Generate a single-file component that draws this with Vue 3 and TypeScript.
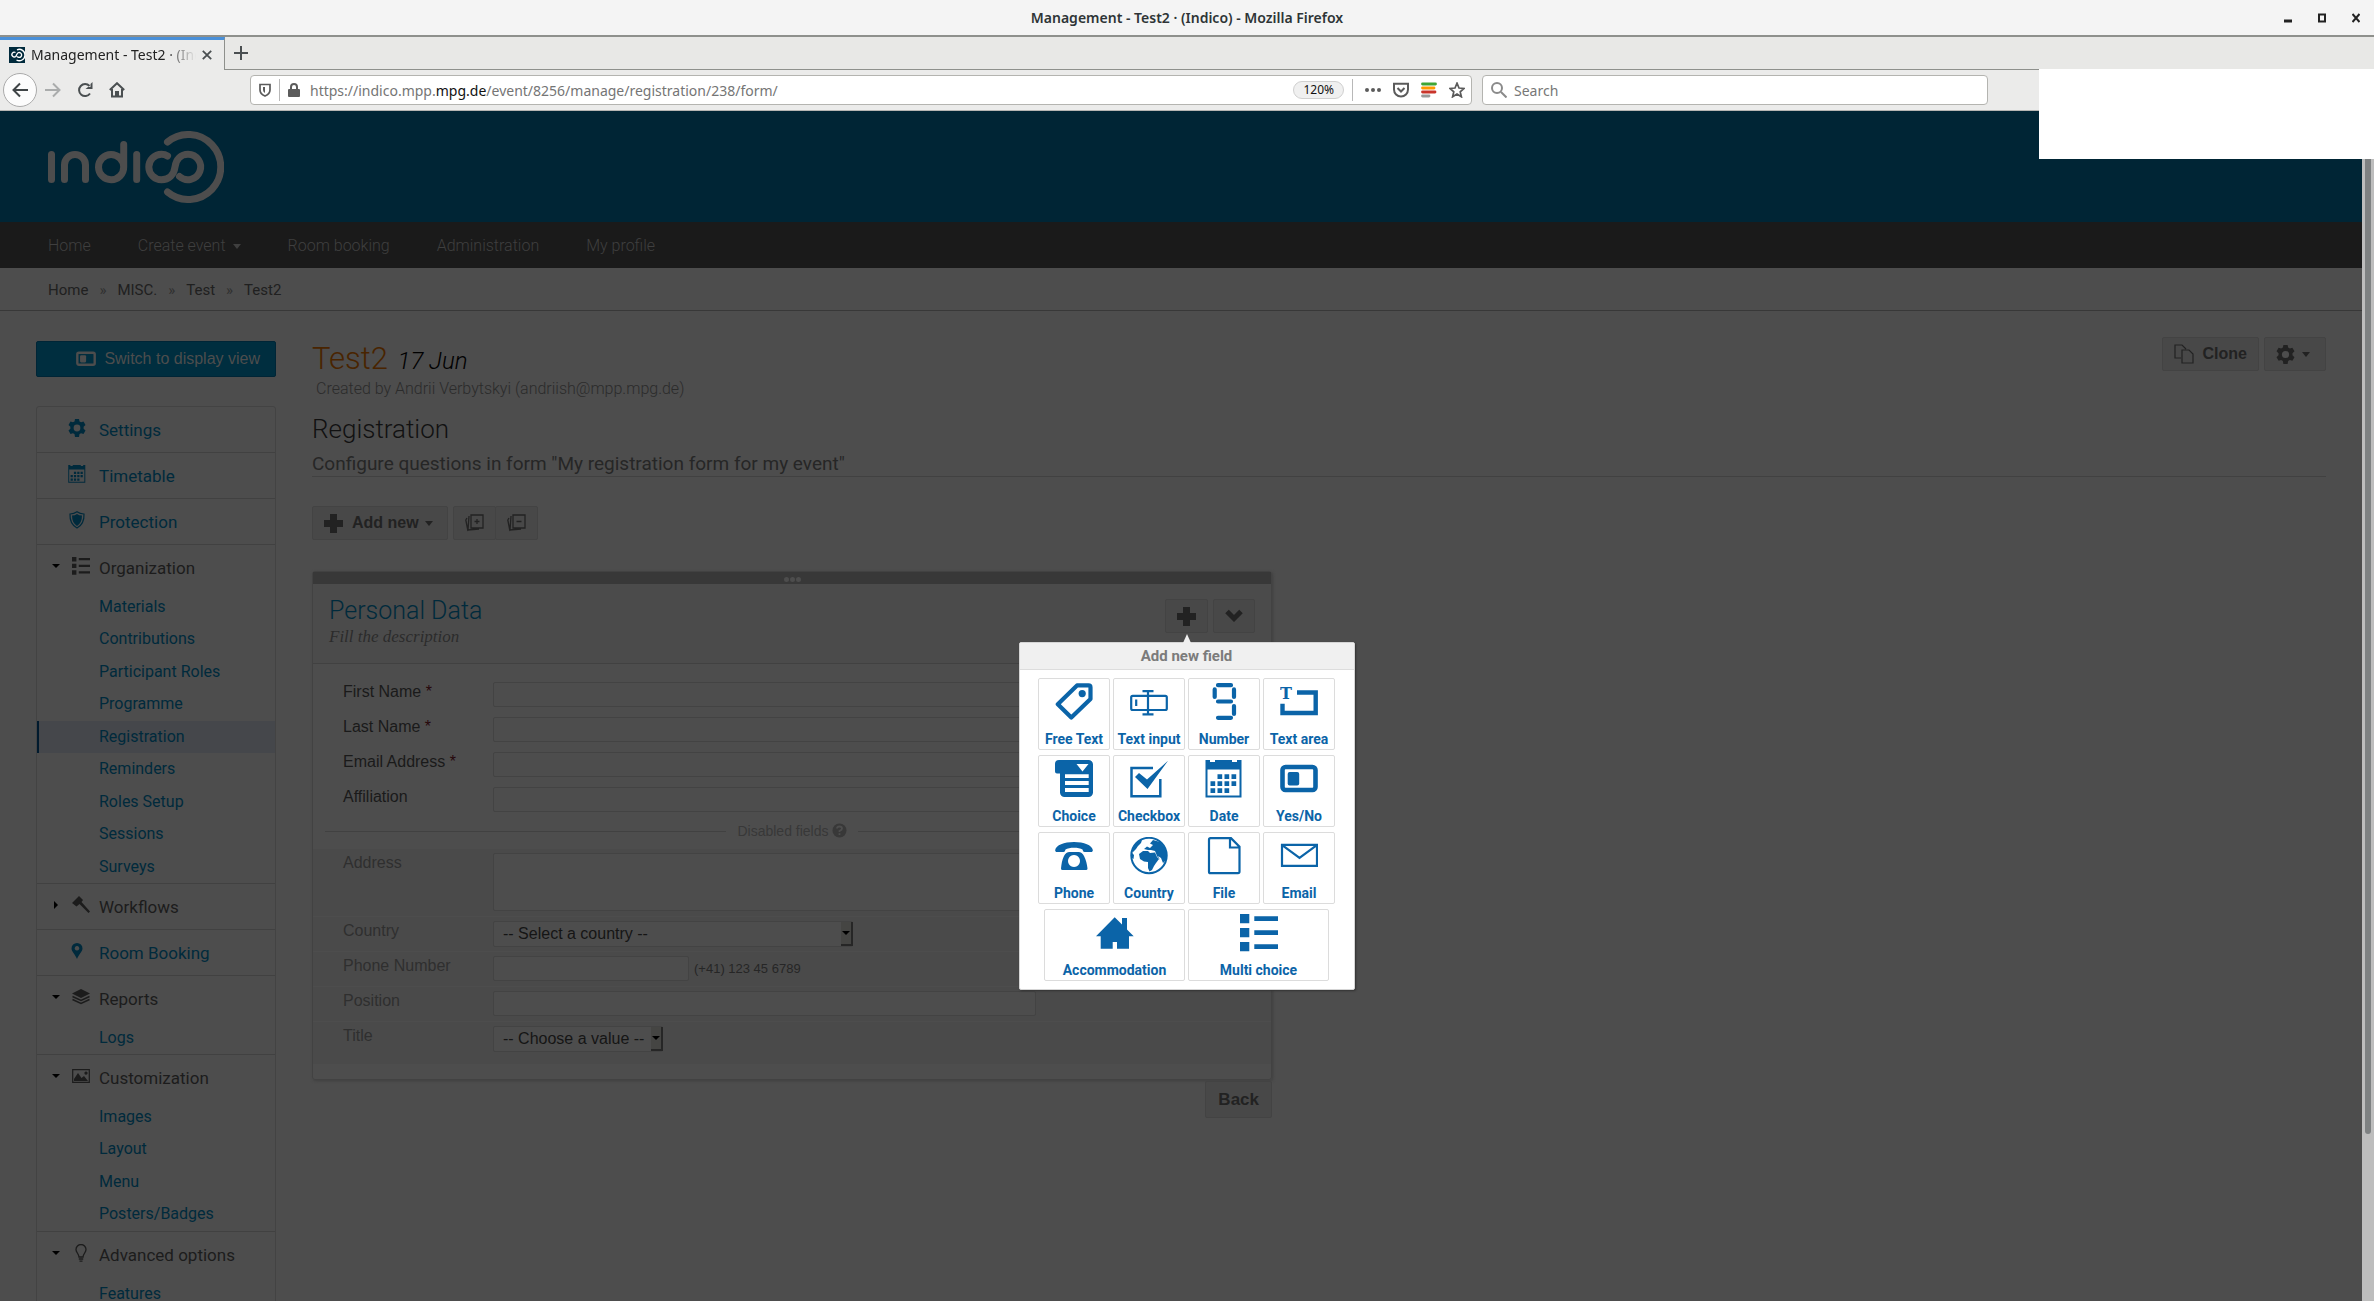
<script setup lang="ts">
import { ref } from 'vue'

interface MenuSection {
  title: string
  icon: string
  kind: 'link' | 'open' | 'closed'
  items?: string[]
}

interface FieldType {
  label: string
  icon: string
}

const navItems = ['Home', 'Create event', 'Room booking', 'Administration', 'My profile']
const crumbs = ['Home', 'MISC.', 'Test', 'Test2']

const sections: MenuSection[] = [
  { title: 'Settings', icon: 'gear', kind: 'link' },
  { title: 'Timetable', icon: 'calendar', kind: 'link' },
  { title: 'Protection', icon: 'shield', kind: 'link' },
  {
    title: 'Organization',
    icon: 'list',
    kind: 'open',
    items: [
      'Materials',
      'Contributions',
      'Participant Roles',
      'Programme',
      'Registration',
      'Reminders',
      'Roles Setup',
      'Sessions',
      'Surveys',
    ],
  },
  { title: 'Workflows', icon: 'gavel', kind: 'closed' },
  { title: 'Room Booking', icon: 'pin', kind: 'link' },
  { title: 'Reports', icon: 'layers', kind: 'open', items: ['Logs'] },
  {
    title: 'Customization',
    icon: 'image',
    kind: 'open',
    items: ['Images', 'Layout', 'Menu', 'Posters/Badges'],
  },
  { title: 'Advanced options', icon: 'bulb', kind: 'open', items: ['Features'] },
]

const activeItem = ref('Registration')

const enabledFields = [
  { id: 'first-name', label: 'First Name', required: true },
  { id: 'last-name', label: 'Last Name', required: true },
  { id: 'email', label: 'Email Address', required: true },
  { id: 'affiliation', label: 'Affiliation', required: false },
]

const fieldRows: FieldType[][] = [
  [
    { label: 'Free Text', icon: 'tag' },
    { label: 'Text input', icon: 'textinput' },
    { label: 'Number', icon: 'number' },
    { label: 'Text area', icon: 'textarea' },
  ],
  [
    { label: 'Choice', icon: 'choice' },
    { label: 'Checkbox', icon: 'checkbox' },
    { label: 'Date', icon: 'calendar' },
    { label: 'Yes/No', icon: 'toggle' },
  ],
  [
    { label: 'Phone', icon: 'phone' },
    { label: 'Country', icon: 'globe' },
    { label: 'File', icon: 'file' },
    { label: 'Email', icon: 'mail' },
  ],
  [
    { label: 'Accommodation', icon: 'house' },
    { label: 'Multi choice', icon: 'list' },
  ],
]
</script>

<template>
  <div class="window">
    <svg class="sprite" aria-hidden="true">
      <symbol id="tag" viewBox="0 0 38 38">
        <path d="M22 2.4H33.5Q35.5 2.4 35.5 4.4V16L16.3 34.6L2.8 21.2Z" fill="none" stroke="currentColor" stroke-width="4.2" stroke-linejoin="round" />
        <circle cx="27.2" cy="10.6" r="3.6" fill="currentColor" />
      </symbol>
      <symbol id="textinput" viewBox="0 0 38 38">
        <rect x="1.2" y="12.8" width="35.6" height="14.2" rx="1.5" fill="none" stroke="currentColor" stroke-width="2.2" />
        <path d="M18 8.5V31M12.5 8.2H23.5M12.5 31.3H23.5M6.2 16.5V23" fill="none" stroke="currentColor" stroke-width="2.2" />
      </symbol>
      <symbol id="number" viewBox="0 0 38 38">
        <path d="M13 2.2H26M9.7 6.4V14M29 6.4V14M13 18.5H26M29 23V31M13 34.8H26" fill="none" stroke="currentColor" stroke-width="4.2" stroke-linecap="round" />
      </symbol>
      <symbol id="textarea" viewBox="0 0 38 38">
        <path d="M17 9.5H35.7V30H2.5V20.8" fill="none" stroke="currentColor" stroke-width="4.4" />
        <text x="0" y="16" font-family="DejaVu Serif, serif" font-weight="700" font-size="16" fill="currentColor">T</text>
      </symbol>
      <symbol id="choice" viewBox="0 0 38 38">
        <path fill-rule="evenodd" fill="currentColor" d="M4 0H33.500a4.500 4.500 0 0 1 4.500 4.500V32.500a4.500 4.500 0 0 1-4.500 4.500H9.500a4.500 4.500 0 0 1-4.500-4.500V13.500H2a2 2 0 0 1-2-2V4a4 4 0 0 1 4-4zM21.500 4H33.500L27.500 11.500zM10 14.200H33.700V18H10zM10 21H33.700V25H10zM10 28H33.700V32H10z" />
      </symbol>
      <symbol id="checkbox" viewBox="0 0 38 38">
        <path d="M23 8H1.500V36.300H30.300V19" fill="none" stroke="currentColor" stroke-width="2.5" />
        <path d="M5 17L9 13L17 19.500L38 .8L17.500 29Z" fill="currentColor" />
      </symbol>
      <symbol id="calendar" viewBox="0 0 38 38">
        <path fill-rule="evenodd" fill="currentColor" d="M.5 0H5V2H10V0H27V2H32V0H36.500V37.500H.5zM2.500 9.500V35.500H34.500V9.500z" />
        <path fill="currentColor" d="M12.500 14.300h4.700v4.700h-4.700zM19.500 14.300h4.700v4.700h-4.700zM26.500 14.300h4.700v4.700h-4.700zM5.500 21.300h4.700v4.700h-4.700zM12.500 21.300h4.700v4.700h-4.700zM19.500 21.300h4.700v4.700h-4.700zM26.500 21.300h4.700v4.700h-4.700zM5.500 28.300h4.700v4.700h-4.700zM12.500 28.300h4.700v4.700h-4.700zM19.500 28.300h4.700v4.700h-4.700z" />
      </symbol>
      <symbol id="toggle" viewBox="0 0 38 38">
        <rect x="2.500" y="7" width="33" height="23" rx="3" fill="none" stroke="currentColor" stroke-width="4.6" />
        <rect x="7.700" y="12" width="11.500" height="13.500" rx="2" fill="currentColor" />
      </symbol>
      <symbol id="phone" viewBox="0 0 38 38">
        <path fill="currentColor" d="M.2 13C1 8 9 5 19 5S37 8 37.800 13C38 14.500 37 15 36 15H29.500Q28 15 27.500 12.500C24 10 14 10 10.500 12.500Q10 15 8.500 15H2C1 15 0 14.500 .2 13z" />
        <path fill-rule="evenodd" fill="currentColor" d="M14.500 15H23.500Q27 15 29 19C31 23 32 27 32.500 31.500Q32.500 33 31 33H7.500Q6 33 6 31.500C6.500 27 7 23 9 19Q11 15 14.500 15zM19 18a6 6 0 1 0 .01 0z" />
      </symbol>
      <symbol id="globe" viewBox="0 0 38 38">
        <circle cx="19" cy="18.500" r="17.700" fill="none" stroke="currentColor" stroke-width="2" />
        <path fill="currentColor" d="M2 14L4 9L9 4L12 3L11 6L8 9L6 12L3 15z" />
        <path fill="currentColor" d="M9 17L13 14L18 14L20 16L25 15.500L27 20L29 22L26 26L24 29L22 33L19.500 34.500L18 31L18 25L14 24.500L10 22z" />
        <path fill="currentColor" d="M14 12L17 9.500L20 11L23 8L20 6.500L23 3L30 5L35 11L37 17L36 23L33 26L31 21L28 19L30 23L27 19L25 14L21 13L18 13zM2 16L4 18L3.500 22L2 21z" />
      </symbol>
      <symbol id="file" viewBox="0 0 38 38">
        <path d="M5.500 1.200H26L34.500 9.700V34.500Q34.500 36.200 33 36.200H5.500Q4 36.200 4 34.700V2.700Q4 1.200 5.500 1.200zM25 1.500V10.500H34.300" fill="none" stroke="currentColor" stroke-width="2.2" />
      </symbol>
      <symbol id="mail" viewBox="0 0 38 38">
        <path d="M2 7.800H37V28.800H2zM2.500 8.300L19.500 21L36.500 8.300" fill="none" stroke="currentColor" stroke-width="2.200" />
      </symbol>
      <symbol id="house" viewBox="0 0 38 38">
        <path fill="currentColor" d="M18.700 3.300L26 10.500V4H31V15.500L37.700 22.300H33V34.700H21V28H16.700V34.700H4.700V22.300H0z" />
      </symbol>
      <symbol id="list" viewBox="0 0 38 38">
        <path fill="currentColor" d="M0 0h9.300v9.300H0zM14.300 2.300H38v4.700H14.300zM0 14h9.300v9.300H0zM14.300 16.300H38V21H14.300zM0 28h9.300v9.300H0zM14.300 30.300H38V35H14.300z" />
      </symbol>
      <symbol id="gear" viewBox="0 0 18 18">
        <path fill="currentColor" d="M7 0h4l.5 2.400 1.600.9L15.500 2.500l2 3.500-1.900 1.700v2L17.500 11.500l-2 3.500-2.400-.8-1.600.9L11 18H7l-.5-2.900-1.600-.9-2.400.8-2-3.500 1.900-1.800v-2L.5 6l2-3.500 2.400.8 1.600-.9z" />
        <circle class="hole" cx="9" cy="9" r="3.400" />
      </symbol>
      <symbol id="shield" viewBox="0 0 18 18">
        <path d="M9 .8Q12 3 16 3Q16.500 13 9 17Q1.500 13 2 3Q6 3 9 .8z" fill="none" stroke="currentColor" stroke-width="1.200" />
        <path d="M9 3Q11 4.500 14 4.600Q14 12 9 15Q4 12 4 4.600Q7 4.500 9 3z" fill="currentColor" />
      </symbol>
      <symbol id="gavel" viewBox="0 0 18 18">
        <path d="M0 7L7 0L11 4L9.500 6L18 15.500L16.500 17L7.500 8L4.500 10.500z" fill="currentColor" />
      </symbol>
      <symbol id="pin" viewBox="0 0 18 18">
        <path fill-rule="evenodd" fill="currentColor" d="M9 1a5.500 5.500 0 0 1 5.500 5.500C14.500 9.500 11 12 9 17C7 12 3.500 9.500 3.500 6.500A5.500 5.500 0 0 1 9 1zM9 4a2.300 2.300 0 1 0 .01 0z" />
      </symbol>
      <symbol id="layers" viewBox="0 0 18 18">
        <path fill="currentColor" d="M9 1L18 5.500L9 10L0 5.500z" />
        <path d="M.5 8.500L9 12.500L17.500 8.500M.5 11.500L9 15.500L17.500 11.500" fill="none" stroke="currentColor" stroke-width="1.400" />
      </symbol>
      <symbol id="image" viewBox="0 0 18 18">
        <path d="M.7 2.700H17.300V15.300H.7z" fill="none" stroke="currentColor" stroke-width="1.200" />
        <path fill="currentColor" d="M2 14V12L6 6L9.500 11L12 9L16 14zM14 4.500a1.600 1.600 0 1 0 .01 0z" />
      </symbol>
      <symbol id="bulb" viewBox="0 0 18 18">
        <path d="M7 13C7 10 4 8.500 4 5.500A5 5 0 0 1 14 5.500C14 8.500 11 10 11 13zM6.800 15H11.200M7.500 17.200H10.500" fill="none" stroke="currentColor" stroke-width="1.300" />
      </symbol>
      <symbol id="plus" viewBox="0 0 19 19">
        <path fill="currentColor" d="M6 0h7v6h6v7h-6v6H6v-6H0V6h6z" />
      </symbol>
      <symbol id="mark" viewBox="0 0 176 72">
        <path
          d="M3.500 23.500V48.500M16.500 48.500V34A10.500 10.500 0 0 1 37.500 34V48.500M75.700 13.500V36A12.600 12.600 0 1 1 63 23.500C70 23.500 75.700 29 75.700 36M88.700 23.500V48.500M119.500 25Q117 23.300 113.500 23.300A12.700 12.700 0 0 0 113.500 48.700C121 48.700 126 43.500 127 36C128 28.500 133 23.300 140 23.300A12.700 12.700 0 1 1 131.500 45.500"
          fill="none"
          stroke="currentColor"
          stroke-width="7"
          stroke-linecap="round"
        />
        <path d="M119.500 11A32.500 32.500 0 1 1 119.500 61" fill="none" stroke="currentColor" stroke-width="7" stroke-linecap="round" />
      </symbol>
    </svg>

    <div class="titlebar">
      <span class="titlebar-text">Management - Test2 · (Indico) - Mozilla Firefox</span>
      <div class="window-controls">
        <button type="button" aria-label="Minimize"><svg width="8" height="10" viewBox="0 0 8 10"><path d="M0 8H8" stroke="#222" stroke-width="3" /></svg></button>
        <button type="button" aria-label="Maximize"><svg width="8" height="10" viewBox="0 0 8 10"><path d="M1 1.500H7V8.500H1z" fill="none" stroke="#222" stroke-width="2" /></svg></button>
        <button type="button" aria-label="Close"><svg width="8" height="10" viewBox="0 0 8 10"><path d="M.5 1L7.500 9M7.500 1L.5 9" stroke="#222" stroke-width="2" /></svg></button>
      </div>
    </div>

    <div class="tabbar">
      <div class="tab">
        <svg class="favicon" width="16" height="16" viewBox="0 0 16 16">
          <rect width="16" height="16" fill="#002a3c" />
          <path d="M6.500 5.500A2.400 2.400 0 1 0 6.800 9.500L8 7A2.400 2.400 0 1 1 8.200 9.300M8 2.800A5.700 5.700 0 1 1 7.500 13" fill="none" stroke="#fff" stroke-width="1.400" />
        </svg>
        <span class="tab-text">Management - Test2 · (Indico)</span>
        <button type="button" class="plain" aria-label="Close tab">
          <svg width="10" height="10" viewBox="0 0 10 10"><path d="M.8 .8L9.200 9.200M9.200 .8L.8 9.200" stroke="#4a4f51" stroke-width="1.800" /></svg>
        </button>
      </div>
      <button type="button" class="plain new-tab" aria-label="New tab">
        <svg width="14" height="14" viewBox="0 0 14 14"><path d="M7 0V14M0 7H14" stroke="#4a4f51" stroke-width="2" /></svg>
      </button>
    </div>

    <div class="toolbar">
      <div class="history">
        <button type="button" class="plain back" aria-label="Back">
          <svg width="16" height="16" viewBox="0 0 16 16"><path d="M16 8H1.500M8 1.500L1.500 8L8 14.500" fill="none" stroke="#3f4446" stroke-width="2" /></svg>
        </button>
        <button type="button" class="plain" aria-label="Forward">
          <svg width="16" height="16" viewBox="0 0 16 16"><path d="M0 8H14.500M8 1.500L14.500 8L8 14.500" fill="none" stroke="#aaacac" stroke-width="2" /></svg>
        </button>
        <button type="button" class="plain" aria-label="Reload">
          <svg width="16" height="16" viewBox="0 0 16 16"><path d="M13 11.500A6 6 0 1 1 12.500 4" fill="none" stroke="#4a4f51" stroke-width="2" /><path d="M15.500 0V7H8.500L11 5H13.500V2z" fill="#4a4f51" /></svg>
        </button>
        <button type="button" class="plain" aria-label="Home">
          <svg width="16" height="16" viewBox="0 0 16 16"><path d="M.8 8L8 1.200L15.200 8M3 7V14.500H13V7" fill="none" stroke="#4a4f51" stroke-width="2" /><path d="M6 9h4v6H6z" fill="#4a4f51" /></svg>
        </button>
      </div>
      <div class="urlbar">
        <svg width="12" height="14" viewBox="0 0 12 14"><path d="M1 1.500H11V7Q11 11 6 13Q1 11 1 7z" fill="none" stroke="#5b5b5b" stroke-width="1.700" /><path d="M6 4V10Q4 9 4 7V4z" fill="#5b5b5b" /></svg>
        <i class="bar"></i>
        <svg width="12" height="14" viewBox="0 0 12 14"><path d="M3 7V4A3 3 0 0 1 9 4V7" fill="none" stroke="#5b5b5b" stroke-width="2" /><rect y="6" width="12" height="8" rx="1" fill="#5b5b5b" /></svg>
        <span class="url">https://indico.mpp.<b>mpg.de</b>/event/8256/manage/registration/238/form/</span>
        <span class="zoom-level">120%</span>
        <i class="bar"></i>
        <div class="page-actions">
          <svg width="16" height="16" viewBox="0 0 16 16"><g fill="#5b5b5b"><circle cx="2" cy="8" r="2" /><circle cx="8" cy="8" r="2" /><circle cx="14" cy="8" r="2" /></g></svg>
          <svg width="16" height="16" viewBox="0 0 16 16"><path d="M1 1.800H15V7.500A7 7 0 0 1 1 7.500zM4.500 6L8 9.500L11.500 6" fill="none" stroke="#5b5b5b" stroke-width="2" /></svg>
          <svg width="16" height="16" viewBox="0 0 16 16"><g stroke-width="2.800" stroke-linecap="round"><path d="M1.500 2H14.500" stroke="#3fa535" /><path d="M1.500 6H13" stroke="#f90" /><path d="M1.500 10H14" stroke="#c9352b" /><path d="M1.500 14H8" stroke="#999" /></g></svg>
          <svg width="16" height="16" viewBox="0 0 16 16"><path d="M8 1.200L10 6L15 6.400L11.200 9.800L12.400 14.800L8 12L3.600 14.800L4.800 9.800L1 6.400L6 6z" fill="none" stroke="#5b5b5b" stroke-width="1.700" /></svg>
        </div>
      </div>
      <label class="searchbar">
        <svg width="16" height="16" viewBox="0 0 16 16"><circle cx="6" cy="6" r="5" fill="none" stroke="#8a8a8a" stroke-width="2" /><path d="M10 10L15.500 15.500" stroke="#8a8a8a" stroke-width="2" /></svg>
        <input type="search" placeholder="Search" aria-label="Search" />
      </label>
    </div>

    <div class="viewport">
      <div class="page">
        <header class="site-header">
          <a href="#" aria-label="Indico"><svg class="logo" width="176" height="72"><use href="#mark" /></svg></a>
        </header>

        <nav class="site-nav">
          <a v-for="item in navItems" :key="item" href="#">
            {{ item }}<i v-if="item === 'Create event'" class="caret"></i>
          </a>
        </nav>

        <div class="crumbs">
          <template v-for="(crumb, i) in crumbs" :key="crumb">
            <span v-if="i > 0" class="sep">»</span>
            <a href="#">{{ crumb }}</a>
          </template>
        </div>

        <div class="columns">
          <aside class="sidebar">
            <button type="button" class="switch">
              <svg width="20" height="20"><use href="#toggle" /></svg>
              Switch to display view
            </button>
            <ul class="menu">
              <li v-for="s in sections" :key="s.title" class="section">
                <a href="#" class="head" :class="s.kind">
                  <i v-if="s.kind !== 'link'" class="arrow" :class="s.kind"></i>
                  <svg class="menu-icon" width="18" height="18"><use :href="'#' + s.icon" /></svg>
                  <span>{{ s.title }}</span>
                </a>
                <ul v-if="s.items" class="items">
                  <li v-for="item in s.items" :key="item" :class="{ active: item === activeItem }">
                    <a href="#">{{ item }}</a>
                  </li>
                </ul>
              </li>
            </ul>
          </aside>

          <main class="content">
            <div class="event-head">
              <div class="event-title">
                <h1>Test2 <em>17 Jun</em></h1>
                <p>Created by Andrii Verbytskyi (andriish@mpp.mpg.de)</p>
              </div>
              <div class="event-actions">
                <button type="button" class="btn">
                  <svg width="20" height="20" viewBox="0 0 20 20"><path d="M7 14H1V1H8L12 5M8 6H15L19 10V19H8z" fill="none" stroke="currentColor" stroke-width="1.200" /></svg>
                  Clone
                </button>
                <button type="button" class="btn settings" aria-label="Event settings">
                  <svg width="19" height="19"><use href="#gear" /></svg>
                  <i class="caret"></i>
                </button>
              </div>
            </div>

            <h2>Registration</h2>
            <p class="subtitle">Configure questions in form "My registration form for my event"</p>

            <div class="form-tools">
              <button type="button" class="btn">
                <svg width="19" height="19"><use href="#plus" /></svg>
                Add new
                <i class="caret"></i>
              </button>
              <div class="btn-group">
                <button type="button" class="btn" aria-label="Expand all">
                  <svg width="19" height="18" viewBox="0 0 19 18"><path d="M6 1H18V14H6zM4 2L3 16L14 15M2 4L.8 6L3 17M12 5V10M9.500 7.500H14.500" fill="none" stroke="currentColor" stroke-width="1.300" /></svg>
                </button>
                <button type="button" class="btn" aria-label="Collapse all">
                  <svg width="19" height="18" viewBox="0 0 19 18"><path d="M6 1H18V14H6zM4 2L3 16L14 15M2 4L.8 6L3 17M9.500 7.500H14.500" fill="none" stroke="currentColor" stroke-width="1.300" /></svg>
                </button>
              </div>
            </div>

            <form class="form-builder" @submit.prevent>
              <section class="panel">
                <div class="grip"><i></i><i></i><i></i></div>
                <div class="panel-head">
                  <div>
                    <h3>Personal Data</h3>
                    <p>Fill the description</p>
                  </div>
                  <div class="panel-actions">
                    <div class="anchor">
                      <button type="button" class="btn" aria-label="Add field">
                        <svg width="19" height="19"><use href="#plus" /></svg>
                      </button>
                      <div class="popup" role="dialog" aria-label="Add new field">
                        <h4>Add new field</h4>
                        <div class="types">
                          <div v-for="(row, r) in fieldRows" :key="r" class="type-row">
                            <button v-for="f in row" :key="f.label" type="button" class="type" :class="{ wide: row.length === 2 }">
                              <svg width="38" height="38"><use :href="'#' + f.icon" /></svg>
                              <span>{{ f.label }}</span>
                            </button>
                          </div>
                        </div>
                      </div>
                    </div>
                    <button type="button" class="btn" aria-label="Section options">
                      <svg width="18" height="14" viewBox="0 0 18 14"><path d="M2 2.500L9 9.500L16 2.500" fill="none" stroke="currentColor" stroke-width="5" /></svg>
                    </button>
                  </div>
                </div>

                <div class="rows">
                  <div v-for="f in enabledFields" :key="f.id" class="row">
                    <label :for="f.id">{{ f.label }}<b v-if="f.required"> *</b></label>
                    <input :id="f.id" type="text" />
                  </div>
                </div>

                <div class="divider">
                  <span>Disabled fields
                    <svg width="15" height="15" viewBox="0 0 15 15"><circle cx="7.500" cy="7.500" r="7" fill="currentColor" /><path d="M5 5.500Q5 3.500 7.500 3.500T10 5.500Q10 7 7.500 8V9M7.500 10.300V12" fill="none" stroke="#4d4d4d" stroke-width="1.800" /></svg>
                  </span>
                </div>

                <div class="rows disabled">
                  <div class="row">
                    <label for="address">Address</label>
                    <textarea id="address"></textarea>
                  </div>
                  <div class="row">
                    <label for="country">Country</label>
                    <div class="select country">
                      <select id="country"><option>-- Select a country --</option></select>
                      <i class="drop"></i>
                    </div>
                  </div>
                  <div class="row">
                    <label for="phone-number">Phone Number</label>
                    <input id="phone-number" class="short" type="tel" />
                    <small>(+41) 123 45 6789</small>
                  </div>
                  <div class="row">
                    <label for="position">Position</label>
                    <input id="position" type="text" />
                  </div>
                  <div class="row last">
                    <label for="title">Title</label>
                    <div class="select title">
                      <select id="title"><option>-- Choose a value --</option></select>
                      <i class="drop"></i>
                    </div>
                  </div>
                </div>
              </section>
              <button type="button" class="btn back-btn">Back</button>
            </form>
          </main>
        </div>
      </div>
      <div class="scrollbar"><i></i></div>
    </div>

    <div class="blank"></div>
  </div>
</template>

<style>
html,
body {
  margin: 0;
  background: #4d4d4d;
}
</style>

<style scoped>
* {
  box-sizing: border-box;
}

.window {
  position: relative;
  display: flex;
  flex-direction: column;
  height: 100vh;
  overflow: hidden;
  font-family: Roboto, "Liberation Sans", sans-serif;
  font-size: 16px;
  background: #e8e8e7;
}

button,
input,
select,
textarea {
  margin: 0;
  padding: 0;
  font: inherit;
}

ul,
h1,
h2,
h3,
h4,
p {
  margin: 0;
  padding: 0;
  list-style: none;
  font-weight: 400;
}

a {
  color: inherit;
  text-decoration: none;
}

svg {
  display: block;
  flex: none;
}

.sprite {
  position: absolute;
  width: 0;
  height: 0;
}

.plain {
  display: flex;
  align-items: center;
  justify-content: center;
  border: 0;
  background: none;
}

.titlebar,
.tabbar,
.toolbar {
  flex: none;
  font-family: "Noto Sans", sans-serif;
}

/* Browser frame */
.titlebar {
  display: grid;
  grid-template-columns: 1fr auto 1fr;
  align-items: center;
  height: 37px;
  border-bottom: 2px solid #8e908c;
  background: #f4f4f4;
  color: #2e3436;
}

.titlebar-text {
  grid-column: 2;
  font-size: 14px;
  font-weight: 600;
}

.window-controls {
  display: flex;
  justify-content: flex-end;
  gap: 26px;
  padding-right: 14px;
}

.window-controls button {
  border: 0;
  background: none;
}

.tabbar {
  display: flex;
  height: 33px;
  background: #e8e8e6;
}

.tab {
  display: flex;
  align-items: center;
  width: 225px;
  padding: 0 12px 0 9px;
  border-top: 3px solid #4a90d9;
  border-right: 1px solid #8e908c;
  background: #ebebea;
}

.tab-text {
  flex: 1;
  margin: 0 6px;
  overflow: hidden;
  font-size: 14px;
  line-height: 24px;
  white-space: nowrap;
  color: #222;
  mask-image: linear-gradient(90deg, #000 80%, transparent);
}

.new-tab {
  flex: 1;
  justify-content: flex-start;
  padding-left: 9px;
  border-bottom: 1px solid #8e908c;
}

.toolbar {
  display: flex;
  align-items: center;
  height: 41px;
  padding-left: 3px;
  border-bottom: 1px solid #b6b6b3;
  background: #ebebea;
}

.history {
  display: flex;
  align-items: center;
  gap: 16px;
  width: 247px;
}

.history .back {
  width: 34px;
  height: 34px;
  margin-right: -8px;
  border: 1px solid #aaa;
  border-radius: 50%;
  background: #fcfcfc;
}

.urlbar,
.searchbar {
  display: flex;
  align-items: center;
  height: 30px;
  border: 1px solid #b4b4b0;
  border-radius: 4px;
  background: #fff;
  font-size: 14px;
}

.urlbar {
  flex: 1;
  gap: 8px;
  padding: 0 6px 0 8px;
}

.bar {
  width: 1px;
  height: 22px;
  background: #b8b8b8;
}

.url {
  flex: 1;
  margin-left: 2px;
  color: #757575;
}

.url b {
  font-weight: 400;
  color: #111;
}

.zoom-level {
  padding: 0 9px;
  border: 1px solid #d0d0d0;
  border-radius: 9px;
  background: #f0f0f0;
  font-size: 12px;
  line-height: 16px;
  color: #111;
}

.page-actions {
  display: flex;
  gap: 12px;
  margin-left: 4px;
}

.searchbar {
  flex: 0 1 506px;
  gap: 7px;
  margin: 0 386px 0 10px;
  padding-left: 8px;
}

.searchbar input {
  flex: 1;
  border: 0;
  outline: 0;
  background: none;
}

.searchbar input::placeholder {
  color: #777;
  opacity: 1;
}

.blank {
  position: absolute;
  top: 69px;
  right: 0;
  width: 335px;
  height: 90px;
  background: #fff;
}

/* Page */
.viewport {
  display: flex;
  flex: 1;
  min-height: 0;
}

.page {
  flex: 1;
  min-width: 0;
  overflow: hidden;
  background: #4d4d4d;
}

.scrollbar {
  flex: none;
  width: 12px;
  padding: 0 3px;
  background: #bdbdbd;
}

.scrollbar i {
  display: block;
  height: 86%;
  border-radius: 0 0 3px 3px;
  background: #7e8182;
}

.site-header {
  display: flex;
  height: 111px;
  padding: 20px 48px 0;
  background: #002535;
  color: #4d4d4d;
}

.site-nav {
  display: flex;
  gap: 47px;
  padding: 2px 48px 0;
  background: #1a1a1a;
  color: #3f3f3f;
  font-weight: 300;
  line-height: 44px;
}

.caret {
  display: inline-block;
  border: 4px solid transparent;
  border-top: 5px solid currentColor;
  border-bottom: 0;
}

.site-nav .caret {
  margin-left: 7px;
  vertical-align: 2px;
}

.crumbs {
  display: flex;
  gap: 11px;
  height: 43px;
  padding: 0 48px;
  border-bottom: 1px solid #383838;
  font-size: 15px;
  line-height: 44px;
  color: #202020;
}

.crumbs .sep {
  color: #303030;
}

.columns {
  display: flex;
  align-items: flex-start;
  gap: 36px;
  padding: 26px 36px 0;
}

/* Sidebar */
.sidebar {
  flex: none;
  width: 240px;
  padding-top: 4px;
}

.switch {
  display: flex;
  align-items: center;
  justify-content: flex-end;
  gap: 8px;
  width: 100%;
  height: 36px;
  padding-right: 15px;
  border: 1px solid #002536;
  border-radius: 2px;
  background: #002e3f;
  color: #4d4d4d;
  font-family: "Liberation Sans", sans-serif;
}

.menu {
  margin-top: 29px;
  border: 1px solid #434343;
  border-radius: 3px;
}

.section + .section {
  border-top: 1px solid #414141;
}

.head {
  display: flex;
  align-items: center;
  height: 45px;
  padding-left: 15px;
  font-size: 17px;
  color: #1c1c1c;
}

.head.link {
  padding-left: 31px;
  color: #002a3c;
}

.head span {
  margin-left: 9px;
}

.head.link span {
  margin-left: 13px;
}

.menu-icon {
  margin-bottom: 4px;
}

.head .arrow {
  width: 8px;
  height: 8px;
  margin: 0 12px 3px 0;
}

.arrow::before {
  content: "";
  display: block;
  border: 4px solid transparent;
}

.arrow.open::before {
  margin-top: 2px;
  border-top-color: #000;
}

.arrow.closed::before {
  margin-left: 2px;
  border-left-color: #000;
}

.items {
  padding-top: 1px;
}

.items li {
  height: 32px;
  border-left: 2px solid transparent;
  line-height: 32px;
  color: #002a3c;
}

.items li:nth-child(even) {
  height: 33px;
}

.items a {
  display: block;
  padding-left: 60px;
}

.items li.active {
  border-left-color: #001a2e;
  background: #45474b;
}

.hole {
  fill: #4d4d4d;
}

/* Content */
.content {
  flex: 1;
  min-width: 0;
}

.btn {
  display: flex;
  align-items: center;
  height: 34px;
  padding: 0 11px;
  border: 1px solid #434343;
  border-radius: 2px;
  background: #484848;
  color: #222;
  font-family: "Liberation Sans", sans-serif;
  font-weight: 700;
  gap: 9px;
}

.event-head {
  display: flex;
  justify-content: space-between;
}

.event-title {
  padding-top: 4px;
}

.event-actions {
  display: flex;
  gap: 5px;
}

.event-actions .settings {
  gap: 7px;
  padding-right: 15px;
}

h1 {
  font-size: 31px;
  line-height: 36px;
  font-weight: 300;
  color: #492400;
}

h1 em {
  margin-left: 2px;
  font-size: 24px;
  line-height: 24px;
  color: #000;
}

.event-title p {
  margin-top: 2px;
  padding-left: 4px;
  font-weight: 300;
  line-height: 20px;
  color: #2b2b2b;
}

h2 {
  margin-top: 14px;
  font-size: 26px;
  line-height: 32px;
  font-weight: 300;
  color: #111;
}

.subtitle {
  margin-top: 7px;
  border-bottom: 1px solid #414141;
  font-size: 19px;
  line-height: 24px;
  color: #262626;
}

.form-tools {
  display: flex;
  gap: 5px;
  margin-top: 29px;
}

.form-tools .caret {
  margin-left: -3px;
  margin-right: 3px;
}

.btn-group {
  display: flex;
}

.btn-group .btn + .btn {
  margin-left: -1px;
}

.form-builder {
  display: flex;
  flex-direction: column;
  align-items: flex-end;
  max-width: 960px;
  margin-top: 31px;
  font-family: "Liberation Sans", sans-serif;
}

.panel {
  width: 100%;
  padding-bottom: 14px;
  border: 1px solid #424242;
  border-radius: 3px;
  box-shadow: 1px 1px 3px #404040;
}

.grip {
  display: flex;
  justify-content: center;
  gap: 1px;
  height: 12px;
  padding-top: 5px;
  background: #383838;
}

.grip i {
  width: 5px;
  height: 5px;
  border-radius: 50%;
  background: #4d4d4d;
}

.panel-head {
  display: flex;
  justify-content: space-between;
  height: 80px;
  padding: 11px 16px 0;
  border-bottom: 1px solid #414141;
  background: #4b4b4b;
}

h3 {
  font-family: Roboto, sans-serif;
  font-size: 25px;
  line-height: 32px;
  font-weight: 300;
  color: #002a3c;
}

.panel-head p {
  font-family: "Liberation Serif", serif;
  font-style: italic;
  font-size: 17px;
  line-height: 20px;
  color: #2b2b2b;
}

.panel-actions {
  display: flex;
  gap: 5px;
  padding-top: 4px;
}

.anchor {
  position: relative;
}

.rows {
  padding-top: 14px;
}

.row {
  display: flex;
  align-items: flex-start;
  height: 35px;
  padding: 4px 0 0 30px;
  line-height: 20px;
  color: #1a1a1a;
}

.row label {
  width: 150px;
}

.row label b {
  font-weight: 400;
  color: #26070b;
}

.row input,
.row textarea,
.row select {
  width: 543px;
  height: 25px;
  border: 1px solid #434343;
  border-radius: 2px;
  background: #4d4d4d;
  resize: none;
}

.row textarea {
  height: 58px;
}

.row input.short {
  width: 196px;
}

.row small {
  margin-left: 5px;
  font-size: 13px;
  line-height: 26px;
}

.divider {
  display: flex;
  align-items: center;
  gap: 11px;
  margin: 0 12px;
  height: 26px;
  color: #383838;
  font-size: 14px;
}

.divider::before,
.divider::after {
  content: "";
  flex: 1;
  height: 1px;
  background: #414141;
}

.divider span {
  display: flex;
  gap: 3px;
}

.rows.disabled {
  padding-top: 5px;
}

.disabled .row {
  height: 34px;
  margin-bottom: 1px;
  background: #4a4a4a;
}

.disabled .row label {
  color: #2f2f2f;
}

.disabled .row small {
  color: #262626;
}

.disabled .row:first-child {
  height: 67px;
}

.disabled .row.last {
  height: 42px;
}

.select {
  position: relative;
}

.select.country {
  width: 360px;
}

.select.title {
  width: 170px;
}

.row .select select {
  display: block;
  width: 100%;
  height: 26px;
  padding-left: 9px;
  appearance: none;
  color: #151515;
}

.drop {
  position: absolute;
  top: 1px;
  right: 0;
  bottom: 1px;
  display: flex;
  align-items: center;
  justify-content: center;
  width: 12px;
  border-right: 2px solid #262626;
  border-bottom: 2px solid #262626;
  background: #454543;
}

.drop::before {
  content: "";
  border: 4px solid transparent;
  border-top-color: #000;
  border-bottom: 0;
}

.back-btn {
  height: 37px;
  margin-top: 1px;
  padding: 0 12px;
  font-size: 17px;
}

/* Field type picker */
.popup {
  position: absolute;
  top: 43px;
  left: 50%;
  z-index: 2;
  width: 336px;
  margin-left: -168px;
  border: 1px solid #d5d5d5;
  border-radius: 2px;
  background: #fff;
  box-shadow: 1px 1px 2px #333;
  font-family: Roboto, sans-serif;
}

.popup::before {
  content: "";
  position: absolute;
  top: -9px;
  left: 50%;
  margin-left: -4px;
  border: 4px solid transparent;
  border-top: 0;
  border-bottom: 9px solid #f0f0f0;
}

h4 {
  border-bottom: 1px solid #ddd;
  background: #f0f0f0;
  font-size: 15px;
  font-weight: 700;
  line-height: 26px;
  text-align: center;
  color: #7b7b7b;
}

.types {
  display: flex;
  flex-direction: column;
  gap: 5px;
  padding: 8px 0;
}

.type-row {
  display: flex;
  justify-content: center;
  gap: 3px;
}

.type {
  display: flex;
  flex-direction: column;
  align-items: center;
  justify-content: space-between;
  width: 72px;
  height: 72px;
  padding: 4px 0 1px;
  border: 1px solid #dcdcdc;
  border-radius: 2px;
  background: #fff;
  color: #0b64a8;
  font-size: 14px;
  font-weight: 700;
  line-height: 17px;
  white-space: nowrap;
}

.type.wide {
  width: 141px;
}
</style>
